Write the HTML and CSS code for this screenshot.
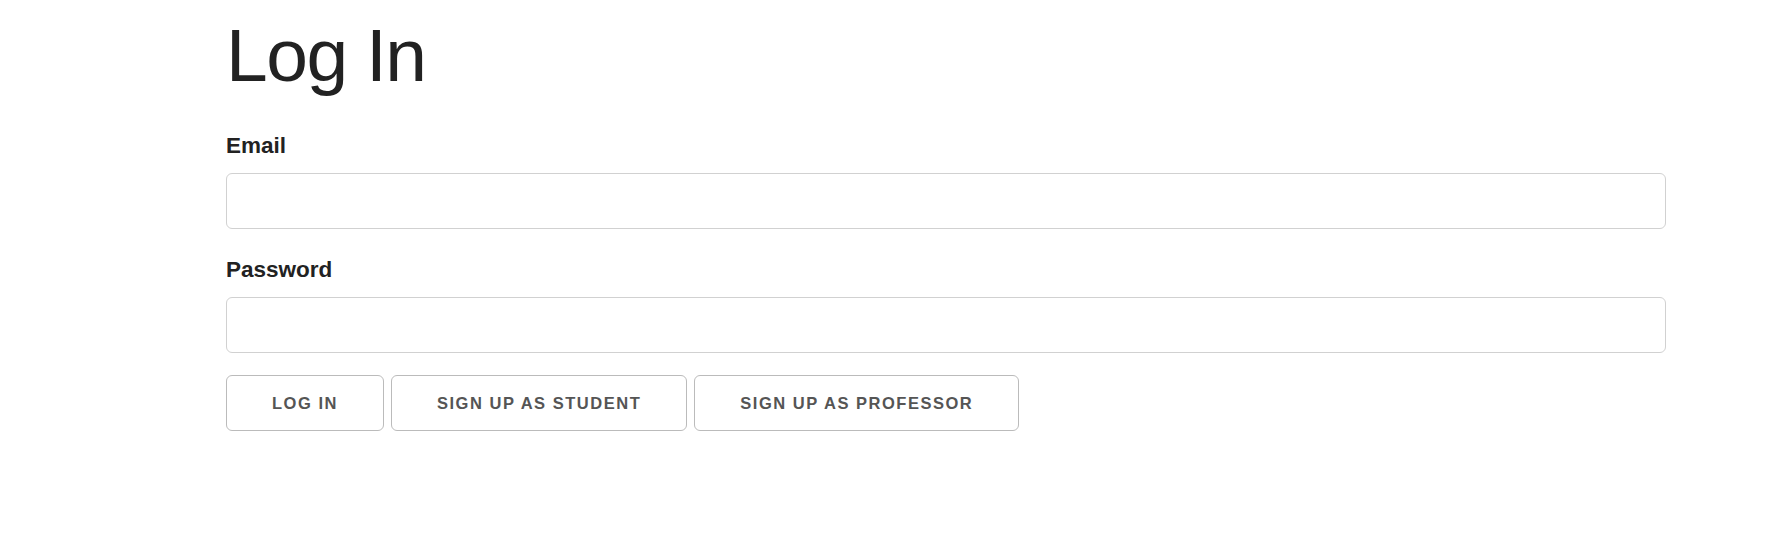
FILE: index.html
```html
<!DOCTYPE html>
<html>
<head>
<meta charset="utf-8">
<link rel="stylesheet" href="styles.css">
</head>
<body>
<div class="container">
  <h1 class="title">Log In</h1>
  <form class="form">
    <label class="label" for="email">Email</label>
    <input class="field" id="email" type="email">
    <label class="label" for="password">Password</label>
    <input class="field" id="password" type="password">
    <div class="actions">
      <button type="button" class="btn">Log In</button>
      <button type="button" class="btn">Sign up as student</button>
      <button type="button" class="btn">Sign up as professor</button>
    </div>
  </form>
</div>
</body>
</html>
```

FILE: styles.css
```css
html, body {
  margin: 0;
  padding: 0;
  background: #fff;
}
body {
  font-family: "Liberation Sans", Arial, Helvetica, sans-serif;
  color: #222;
}
.container {
  padding: 10px 0 0 226px;
  width: 1440px;
}
.title {
  margin: 0 0 27px 0;
  font-size: 75px;
  line-height: 90px;
  font-weight: 400;
  letter-spacing: -1.5px;
  color: #222;
}
.form {
  display: flex;
  flex-direction: column;
}
.label {
  display: block;
  font-size: 22.5px;
  line-height: 38px;
  font-weight: 700;
  color: #222;
  margin-bottom: 8px;
}
.field {
  box-sizing: border-box;
  width: 1440px;
  height: 56px;
  margin: 0 0 22px 0;
  padding: 9px 15px;
  border: 1px solid #d1d1d1;
  border-radius: 6px;
  background: #fff;
  font-family: inherit;
  font-size: 22px;
  outline: none;
}
.actions {
  display: flex;
  gap: 7px;
}
.btn {
  box-sizing: border-box;
  height: 56px;
  padding: 0 45px;
  border: 1px solid #bbb;
  border-radius: 6px;
  background: transparent;
  color: #555;
  font-family: "Liberation Sans", Arial, sans-serif;
  font-size: 16.5px;
  font-weight: 700;
  letter-spacing: 1.52px;
  text-transform: uppercase;
  white-space: nowrap;
  cursor: pointer;
}
```
